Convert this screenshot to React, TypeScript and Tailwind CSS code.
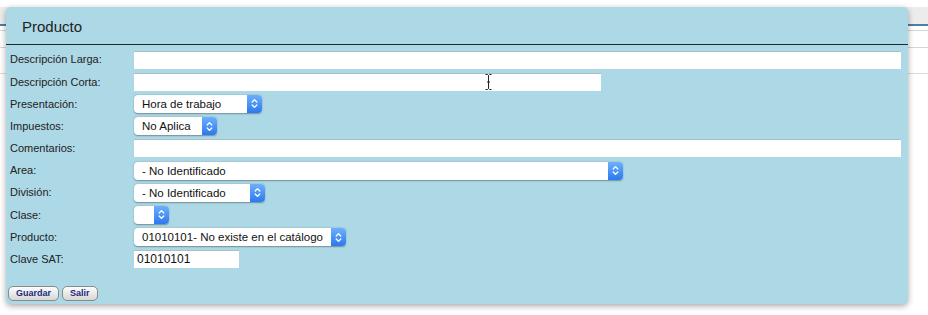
import React from 'react'

function Select({ value, width }: { value: string; width: number }) {
  return (
    <div
      className="flex h-[18px] items-stretch rounded-[4px] bg-white shadow-[0_0.5px_1.5px_rgba(0,0,0,0.35)]"
      style={{ width }}
    >
      <span className="flex-1 truncate pl-[8px] text-[11.5px] leading-[18px] text-[#111]">{value}</span>
      <span className="flex w-[15px] items-center justify-center rounded-r-[4px] bg-gradient-to-b from-[#6cb0fb] to-[#2c78ee]">
        <svg width="7" height="11" viewBox="0 0 7 11" fill="none" stroke="white" strokeWidth="1.3" strokeLinecap="round" strokeLinejoin="round">
          <path d="M1.2 4 L3.5 1.6 L5.8 4" />
          <path d="M1.2 7 L3.5 9.4 L5.8 7" />
        </svg>
      </span>
    </div>
  )
}

function Input({ width, value }: { width: number; value?: string }) {
  return (
    <div
      className="h-[18px] border-t border-[#a9bfc6] bg-white pl-[3px] text-[12px] leading-[17px] text-[#111]"
      style={{ width }}
    >
      {value}
    </div>
  )
}

const rows: { label: string; field: React.ReactNode }[] = [
  { label: 'Descripción Larga:', field: <Input width={767} /> },
  { label: 'Descripción Corta:', field: <Input width={467} /> },
  { label: 'Presentación:', field: <Select value="Hora de trabajo" width={128} /> },
  { label: 'Impuestos:', field: <Select value="No Aplica" width={83} /> },
  { label: 'Comentarios:', field: <Input width={767} /> },
  { label: 'Area:', field: <Select value="- No Identificado" width={489} /> },
  { label: 'División:', field: <Select value="- No Identificado" width={131} /> },
  { label: 'Clase:', field: <Select value="" width={35} /> },
  { label: 'Producto:', field: <Select value="01010101- No existe en el catálogo" width={212} /> },
  { label: 'Clave SAT:', field: <Input width={105} value="01010101" /> },
]

export default function App() {
  return (
    <div className="relative h-[315px] w-[928px] overflow-hidden bg-white font-['Liberation_Sans',Arial,sans-serif]">
      {/* page behind the dialog */}
      <div className="absolute left-0 top-[24px] h-[2px] w-full bg-[#4d7ea6]" />
      <div className="absolute left-0 top-[7px] h-[17px] w-full bg-[#ececec]" />
      <div className="absolute left-0 top-[30px] h-px w-full bg-[#d6d6d6]" />
      <div className="absolute left-0 top-[47px] h-px w-full bg-[#d6d6d6]" />
      <div className="absolute left-0 top-[73px] h-px w-full bg-[#dcdcdc]" />

      <div className="relative ml-[6px] mt-[7px] flex h-[297px] w-[902px] flex-col rounded-[5px] bg-[#add8e6] shadow-[0_2px_6px_rgba(0,0,0,0.35)]">
        <div className="flex h-[38px] items-center border-b border-[#1c2a30] pl-[16px] pt-[4px] text-[15px] text-[#222]">
          Producto
        </div>
        <div className="mt-[3.5px] flex flex-col pl-[4px]">
          {rows.map((r) => (
            <div key={r.label} className="flex h-[22.2px] items-center">
              <span className="w-[124px] text-[11px] text-[#222]">{r.label}</span>
              {r.field}
            </div>
          ))}
        </div>
        <div className="mt-auto mb-[3px] flex gap-[3px] pl-[2px]">
          <button className="h-[15px] rounded-[5px] border border-[#8a8a8a] bg-gradient-to-b from-[#fdfdfd] to-[#d6d6d6] px-[7px] text-[9px] font-bold leading-[13px] text-[#1d2a78]">
            Guardar
          </button>
          <button className="h-[15px] rounded-[5px] border border-[#8a8a8a] bg-gradient-to-b from-[#fdfdfd] to-[#d6d6d6] px-[7px] text-[9px] font-bold leading-[13px] text-[#1d2a78]">
            Salir
          </button>
        </div>
      </div>

      {/* mouse cursor */}
      <svg className="absolute left-[485px] top-[74px]" width="7" height="16" viewBox="0 0 7 16" fill="none" stroke="#222" strokeWidth="1">
        <path d="M0.5 0.5 H2.5 L3.5 1.5 L4.5 0.5 H6.5 M3.5 1.5 V14.5 M0.5 15.5 H2.5 L3.5 14.5 L4.5 15.5 H6.5 M2 8 H5" />
      </svg>
    </div>
  )
}
